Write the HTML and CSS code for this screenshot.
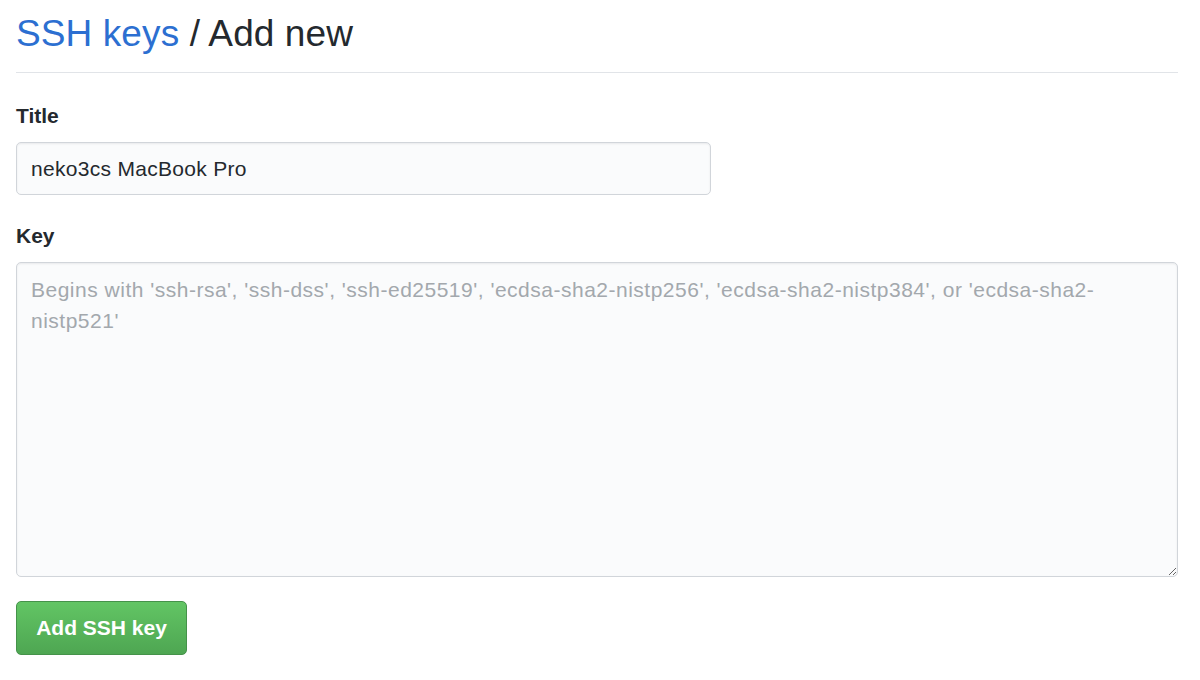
FILE: index.html
```html
<!DOCTYPE html>
<html>
<head>
<meta charset="utf-8">
<link rel="stylesheet" href="styles.css">
</head>
<body>
<div class="page">
  <div class="subhead">
    <h2 class="subhead-heading"><a class="crumb" href="#">SSH keys</a> / Add new</h2>
  </div>
  <form class="form">
    <div class="field field-title">
      <label class="label" for="title">Title</label>
      <input class="input" id="title" type="text" value="neko3cs MacBook Pro">
    </div>
    <div class="field field-key">
      <label class="label" for="key">Key</label>
      <textarea class="textarea" id="key" placeholder="Begins with 'ssh-rsa', 'ssh-dss', 'ssh-ed25519', 'ecdsa-sha2-nistp256', 'ecdsa-sha2-nistp384', or 'ecdsa-sha2-nistp521'"></textarea>
    </div>
    <div class="actions">
      <button class="btn" type="button">Add SSH key</button>
    </div>
  </form>
</div>
</body>
</html>
```

FILE: styles.css
```css
* { box-sizing: border-box; }
html, body { margin: 0; padding: 0; background: #fff; }
body {
  font-family: "Liberation Sans", Arial, sans-serif;
  color: #24292e;
}
.page {
  padding: 0 22px 0 16px;
}
.subhead {
  display: flex;
  align-items: flex-end;
  height: 73px;
  border-bottom: 1px solid #e1e4e8;
  padding-bottom: 16px;
}
.subhead-heading {
  margin: 0;
  font-size: 37px;
  font-weight: 400;
  line-height: 1.2;
  letter-spacing: 0.1px;
  color: #24292e;
}
.crumb {
  color: #2c6fd1;
  text-decoration: none;
}
.form {
  display: flex;
  flex-direction: column;
  padding-top: 30px;
}
.field {
  display: flex;
  flex-direction: column;
}
.field-title { margin-bottom: 28px; }
.field-key { margin-bottom: 24px; }
.label {
  font-size: 21px;
  font-weight: 700;
  line-height: 26px;
  margin-bottom: 13px;
}
.input {
  width: 695px;
  height: 53px;
  padding: 0 14px;
  font-family: "Liberation Sans", Arial, sans-serif;
  font-size: 21px;
  letter-spacing: 0.3px;
  color: #24292e;
  background: #fafbfc;
  border: 1px solid #d1d5da;
  border-radius: 5px;
  box-shadow: inset 0 1px 2px rgba(27,31,35,0.075);
  outline: none;
}
.textarea {
  width: 1162px;
  height: 315px;
  padding: 11px 14px;
  font-family: "Liberation Sans", Arial, sans-serif;
  font-size: 21px;
  letter-spacing: 0.5px;
  line-height: 31px;
  color: #24292e;
  background: #fafbfc;
  border: 1px solid #d1d5da;
  border-radius: 5px;
  box-shadow: inset 0 1px 2px rgba(27,31,35,0.075);
  resize: vertical;
  outline: none;
}
.textarea::placeholder { color: #a3a8ad; }
.actions { display: flex; }
.btn {
  width: 171px;
  height: 54px;
  font-family: "Liberation Sans", Arial, sans-serif;
  font-size: 21px;
  font-weight: 700;
  color: #fff;
  background-image: linear-gradient(180deg, #62c564, #4ea652);
  border: 1px solid #45924a;
  border-radius: 5px;
  cursor: pointer;
}
```
